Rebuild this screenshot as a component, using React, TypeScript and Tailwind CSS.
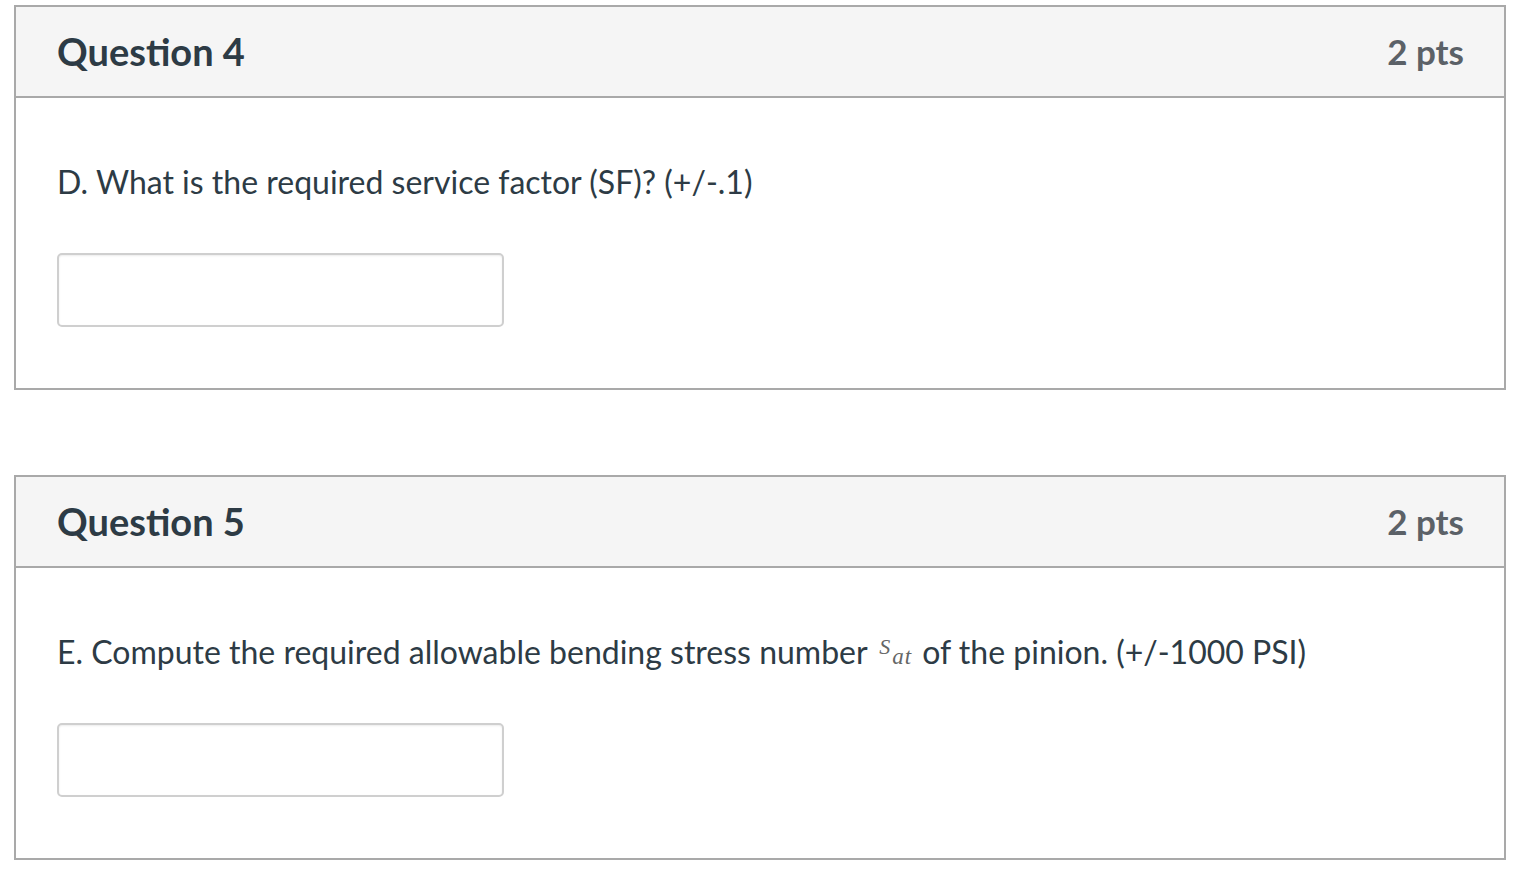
import React from 'react'

type Question = {
  title: string
  points: string
  prompt: React.ReactNode
}

// the little "s_at" symbol from the question text
const SAt = () => (
  <span className="leading-none ml-[4px] mr-[2px] text-[#666] [font-family:'Liberation_Serif',serif] italic">
    <span className="text-[22px] leading-none relative -top-[10px] mr-[2px]">S</span>
    <span className="text-[23px] leading-none tracking-[1px]">at</span>
  </span>
)

const questions: Question[] = [
  {
    title: 'Question 4',
    points: '2 pts',
    prompt: 'D. What is the required service factor (SF)? (+/-.1)',
  },
  {
    title: 'Question 5',
    points: '2 pts',
    prompt: (
      <>
        E. Compute the required allowable bending stress number <SAt /> of the pinion. (+/-1000 PSI)
      </>
    ),
  },
]

function QuestionCard({ q }: { q: Question }) {
  return (
    <div className="border-2 border-[#a9a9a9] bg-white">
      <div className="h-[91px] bg-[#f5f5f5] border-b-2 border-[#a9a9a9] flex items-center justify-between pl-[41px] pr-[40px]">
        <h2 className="text-[38px] font-bold text-[#2d3b45]">{q.title}</h2>
        <span className="text-[35px] font-bold text-[#5b6167]">{q.points}</span>
      </div>
      <div className="h-[290px] pl-[41px] pt-[64px]">
        <p className="text-[32px] leading-[40px] text-[#2d3b45]">{q.prompt}</p>
        <input
          type="text"
          className="mt-[51px] block w-[447px] h-[74px] border-2 border-[#cfcfcf] rounded-[5px] bg-white shadow-[inset_0_1px_2px_rgba(0,0,0,0.08)] outline-none"
        />
      </div>
    </div>
  )
}

export default function App() {
  return (
    <div className="min-h-screen bg-white pt-[5px] pl-[14px] pr-[8px] [font-family:Lato,'Liberation_Sans',sans-serif]">
      <div className="flex flex-col gap-[85px]">
        {questions.map((q) => (
          <QuestionCard key={q.title} q={q} />
        ))}
      </div>
    </div>
  )
}
